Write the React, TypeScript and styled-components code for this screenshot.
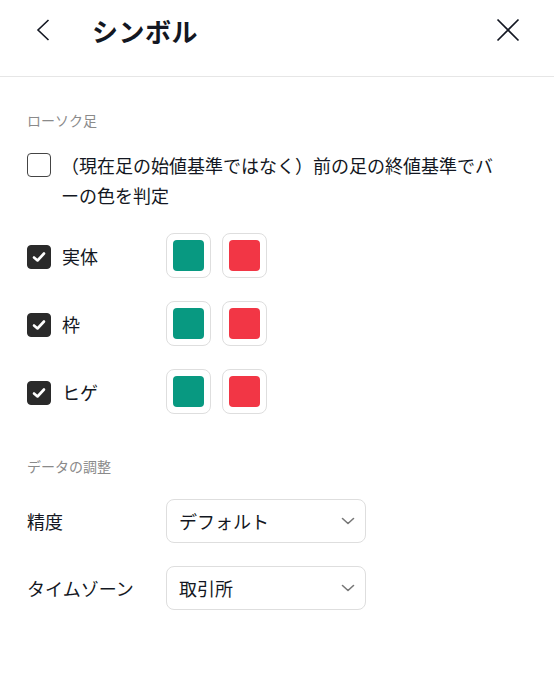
import React from 'react';
import styled, { createGlobalStyle } from 'styled-components';

const palette = {
	text: '#131722',
	muted: '#8a8a8a',
	line: '#e6e6e6',
	border: '#dedede',
	box: '#2a2a2a',
	green: '#089981',
	red: '#f23645',
};

const GlobalStyle = createGlobalStyle`
	html, body {
		margin: 0;
		padding: 0;
		background: #fff;
	}
	body {
		font-family: 'Noto Sans CJK JP', 'Noto Sans', sans-serif;
		color: ${palette.text};
	}
`;

const Page = styled.div`
	width: 554px;
	min-height: 684px;
	background: #fff;
`;

const Header = styled.header`
	height: 77px;
	box-sizing: border-box;
	display: flex;
	align-items: center;
	padding: 0 34px 16px 36px;
	border-bottom: 1px solid ${palette.line};

	.header-title {
		flex: 1;
		margin: 0 0 0 42px;
		font-size: 26px;
		font-weight: 700;
		letter-spacing: 0.5px;
	}
`;

const IconButton = styled.button`
	border: 0;
	background: none;
	padding: 0;
	display: flex;
	align-items: center;
	justify-content: center;
	color: ${palette.text};
	cursor: pointer;
`;

const Content = styled.div`
	padding: 33px 27px 0;
	display: flex;
	flex-direction: column;
`;

const SectionLabel = styled.div<{ $top?: number }>`
	font-size: 14px;
	line-height: 20px;
	color: ${palette.muted};
	margin-top: ${({ $top }) => $top ?? 0}px;
`;

const CheckRow = styled.label`
	display: flex;
	align-items: flex-start;
	gap: 10px;
	margin-top: 20px;
	font-size: 18px;
	line-height: 30px;

	.check-row-text {
		max-width: 440px;
		line-break: anywhere;
	}
`;

const CheckBox = styled.span<{ $checked?: boolean }>`
	flex: none;
	width: 24px;
	height: 24px;
	margin-top: 3px;
	box-sizing: border-box;
	border-radius: 4px;
	border: 1.5px solid ${({ $checked }) => ($checked ? palette.box : '#444')};
	background: ${({ $checked }) => ($checked ? palette.box : '#fff')};
	display: flex;
	align-items: center;
	justify-content: center;
`;

const ColorRow = styled.div`
	display: grid;
	grid-template-columns: 139px auto;
	align-items: center;
	height: 45px;
	margin-top: 23px;
	font-size: 18px;

	.color-row-label {
		display: flex;
		align-items: center;
		gap: 11px;
	}

	.color-row-swatches {
		display: flex;
		gap: 11px;
	}
`;

const Swatch = styled.div<{ $color: string }>`
	width: 45px;
	height: 45px;
	box-sizing: border-box;
	border: 1px solid ${palette.border};
	border-radius: 8px;
	padding: 6px;
	background: #fff;

	&::after {
		content: '';
		display: block;
		width: 100%;
		height: 100%;
		border-radius: 4px;
		background: ${({ $color }) => $color};
	}
`;

const SelectRow = styled.div<{ $top: number }>`
	display: grid;
	grid-template-columns: 139px 200px;
	align-items: center;
	margin-top: ${({ $top }) => $top}px;
	font-size: 18px;
`;

const Select = styled.div`
	height: 44px;
	box-sizing: border-box;
	border: 1px solid ${palette.border};
	border-radius: 8px;
	display: flex;
	align-items: center;
	justify-content: space-between;
	padding: 0 10px 0 12px;
	font-size: 18px;
`;

const Check = () => (
	<svg width='14' height='12' viewBox='0 0 14 12'>
		<path
			d='M2 6.5 L5.5 9.5 L12 2.5'
			fill='none'
			stroke='#fff'
			strokeWidth='2.6'
			strokeLinecap='round'
			strokeLinejoin='round'
		/>
	</svg>
);

const Chevron = () => (
	<svg width='14' height='8' viewBox='0 0 14 8'>
		<path
			d='M1.5 1.5 L7 6.5 L12.5 1.5'
			fill='none'
			stroke='#777'
			strokeWidth='1.6'
			strokeLinecap='round'
			strokeLinejoin='round'
		/>
	</svg>
);

const colorRows = ['実体', '枠', 'ヒゲ'];

const selects = [
	{ label: '精度', value: 'デフォルト', top: 23 },
	{ label: 'タイムゾーン', value: '取引所', top: 23 },
];

const App: React.FC = () => (
	<Page>
		<GlobalStyle />
		<Header>
			<IconButton aria-label='back'>
				<svg width='14' height='22' viewBox='0 0 14 22'>
					<path
						d='M12.5 1 L2 11 L12.5 21'
						fill='none'
						stroke='#131722'
						strokeWidth='1.6'
					/>
				</svg>
			</IconButton>
			<h1 className='header-title'>シンボル</h1>
			<IconButton aria-label='close'>
				<svg width='24' height='24' viewBox='0 0 24 24'>
					<path
						d='M1.5 1.5 L22.5 22.5 M22.5 1.5 L1.5 22.5'
						fill='none'
						stroke='#131722'
						strokeWidth='1.7'
					/>
				</svg>
			</IconButton>
		</Header>
		<Content>
			<SectionLabel>ローソク足</SectionLabel>
			<CheckRow>
				<CheckBox />
				<span className='check-row-text'>
					（現在足の始値基準ではなく）前の足の終値基準でバーの色を判定
				</span>
			</CheckRow>
			{colorRows.map((label) => (
				<ColorRow key={label}>
					<div className='color-row-label'>
						<CheckBox $checked>
							<Check />
						</CheckBox>
						<span>{label}</span>
					</div>
					<div className='color-row-swatches'>
						<Swatch $color={palette.green} />
						<Swatch $color={palette.red} />
					</div>
				</ColorRow>
			))}
			<SectionLabel $top={42}>データの調整</SectionLabel>
			{selects.map(({ label, value, top }) => (
				<SelectRow key={label} $top={top}>
					<span>{label}</span>
					<Select>
						<span>{value}</span>
						<Chevron />
					</Select>
				</SelectRow>
			))}
		</Content>
	</Page>
);

export default App;
